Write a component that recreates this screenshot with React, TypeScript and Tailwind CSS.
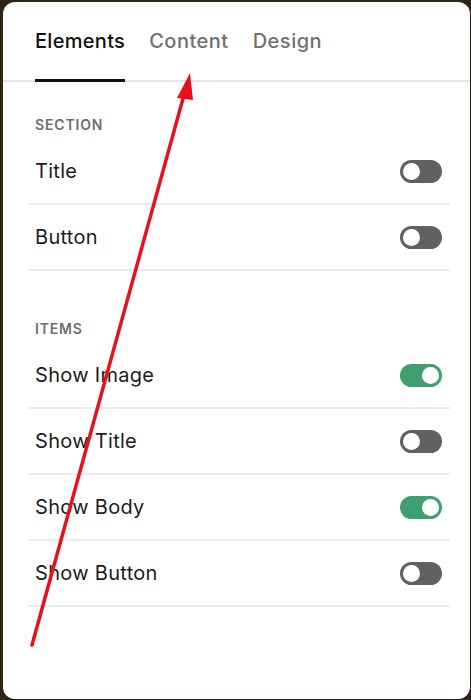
import React from "react";

function Toggle({ on }: { on: boolean }) {
  return (
    <div
      className={`w-[42px] h-[23px] rounded-full flex items-center px-[3px] ${
        on ? "bg-[#3f9f6e] justify-end" : "bg-[#616161] justify-start"
      }`}
    >
      <div className="w-[17px] h-[17px] rounded-full bg-white" />
    </div>
  );
}

function Row({ label, on }: { label: string; on: boolean }) {
  return (
    <div className="h-[66px] flex items-center justify-between border-b-2 border-[#ececec] pl-[7px] pr-[8px]">
      <span className="text-[20px] text-[#1c1c1c] tracking-[0.3px]">{label}</span>
      <Toggle on={on} />
    </div>
  );
}

export default function App() {
  return (
    <div
      className="w-[471px] h-[700px] bg-[#2f2418] relative overflow-hidden"
      style={{ fontFamily: "Inter, 'Noto Sans', sans-serif" }}
    >
      <div className="absolute left-[3px] top-[2px] w-[467px] h-[697px] bg-white rounded-[12px] flex flex-col">
        <div className="flex gap-[24px] px-[32px] border-b-2 border-[#e6e6e6] h-[80px] items-stretch">
          <div className="flex flex-col justify-between pt-[26px]">
            <span className="text-[20px] font-medium text-[#111] leading-[26px] tracking-[0.3px]">Elements</span>
            <div className="h-[3px] bg-[#111] -mb-[2px]" />
          </div>
          <div className="pt-[26px]">
            <span className="text-[20px] font-medium text-[#707070] leading-[26px] tracking-[0.5px]">Content</span>
          </div>
          <div className="pt-[26px]">
            <span className="text-[20px] font-medium text-[#707070] leading-[26px] tracking-[0.5px]">Design</span>
          </div>
        </div>
        <div className="pl-[25px] pr-[20px]">
          <div className="pt-[34px] pl-[7px] text-[14px] font-semibold tracking-[0.06em] text-[#6e6e6e] leading-[18px]">
            SECTION
          </div>
          <div className="mt-[5px]">
            <Row label="Title" on={false} />
            <Row label="Button" on={false} />
          </div>
          <div className="pt-[49px] pl-[7px] text-[14px] font-semibold tracking-[0.06em] text-[#6e6e6e] leading-[18px]">
            ITEMS
          </div>
          <div className="mt-[5px]">
            <Row label="Show Image" on={true} />
            <Row label="Show Title" on={false} />
            <Row label="Show Body" on={true} />
            <Row label="Show Button" on={false} />
          </div>
        </div>
      </div>
      <svg className="absolute left-0 top-0" width="471" height="700" viewBox="0 0 471 700">
        <line x1="32" y1="645" x2="184" y2="95" stroke="#e8101a" strokeWidth="3.5" strokeLinecap="round" />
        <polygon points="190,73 177,98 193,100" fill="#e8101a" />
      </svg>
    </div>
  );
}
